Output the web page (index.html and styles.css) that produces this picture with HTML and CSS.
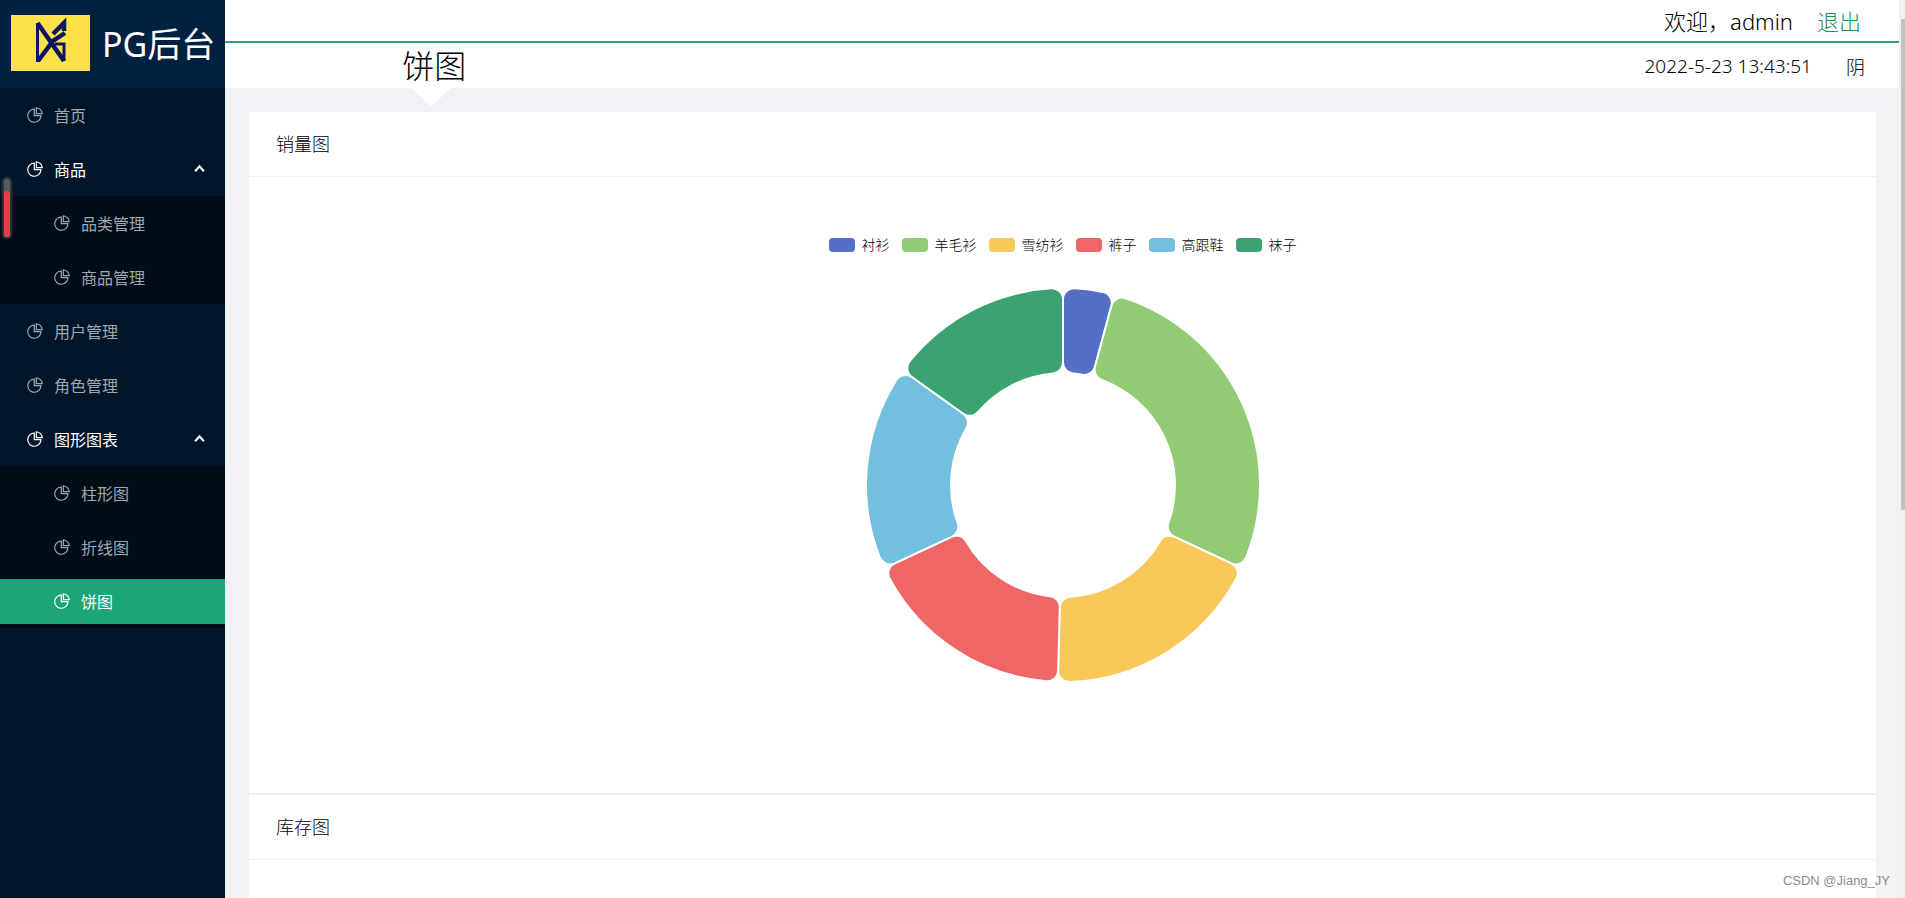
FILE: index.html
```html
<!DOCTYPE html>
<html lang="zh-CN">
<head>
<meta charset="utf-8">
<title>PG后台</title>
<link rel="stylesheet" href="styles.css">
</head>
<body>
<svg class="sprite" aria-hidden="true">
  <symbol id="pie" viewBox="64 64 896 896">
    <path d="M864 518H506V160c0-4.400-3.600-8-8-8h-26a398.460 398.460 0 0 0-282.800 117.100 398.190 398.190 0 0 0-85.700 127.100A397.610 397.610 0 0 0 72 552a398.460 398.460 0 0 0 117.100 282.800c36.700 36.700 79.500 65.600 127.100 85.700A397.610 397.610 0 0 0 472 952a398.460 398.460 0 0 0 282.800-117.100c36.700-36.700 65.600-79.500 85.700-127.100A397.610 397.610 0 0 0 872 552v-26c0-4.400-3.600-8-8-8zM705.700 787.800A331.590 331.590 0 0 1 470.400 884c-88.100-.4-170.900-34.900-233.200-97.200C174.500 724.100 140 640.700 140 552c0-88.700 34.500-172.100 97.200-234.800 54.600-54.600 124.900-87.900 200.800-95.500V586h364.300c-7.700 76.300-41.300 147-96.600 201.800zM952 462.400l-2.600-28.200c-8.500-92.100-49.400-179-115.200-244.600A399.400 399.400 0 0 0 589 74.600L560.700 72c-4.700-.4-8.700 3.200-8.700 7.900V464c0 4.400 3.600 8 8 8l384-1c4.700 0 8.400-4 8-8.600zm-332.200-58.200V147.600a332.240 332.240 0 0 1 166.400 89.800c45.700 45.600 77 103.600 90 166.100l-256.400.7z"/>
  </symbol>
  <symbol id="up" viewBox="0 0 10 8"><path d="M1 6.500 5 2l4 4.500" fill="none" stroke="currentColor" stroke-width="2"/></symbol>
</svg>
<div class="app">
  <aside class="sidebar">
    <a class="brand" href="#">
      <svg class="logo" viewBox="0 0 79 56" aria-hidden="true">
        <rect width="79" height="56" fill="#fee14a"/>
        <g fill="none" stroke="#0b1560">
          <path stroke-width="3" d="M26.500 8v39M53 46V29h-9"/>
          <path stroke-width="4.500" d="M26.500 8 53 46M27 46l15-20 12-8M42 19 53 8v8"/>
        </g>
      </svg>
      <h1 class="brand-name">PG后台</h1>
    </a>
    <nav class="menu">
      <a class="item" href="#"><svg class="icon"><use href="#pie"/></svg>首页</a>
      <button class="item open" type="button"><svg class="icon"><use href="#pie"/></svg>商品<svg class="arrow"><use href="#up"/></svg></button>
      <div class="submenu">
        <a class="item" href="#"><svg class="icon"><use href="#pie"/></svg>品类管理</a>
        <a class="item" href="#"><svg class="icon"><use href="#pie"/></svg>商品管理</a>
      </div>
      <a class="item" href="#"><svg class="icon"><use href="#pie"/></svg>用户管理</a>
      <a class="item" href="#"><svg class="icon"><use href="#pie"/></svg>角色管理</a>
      <button class="item open" type="button"><svg class="icon"><use href="#pie"/></svg>图形图表<svg class="arrow"><use href="#up"/></svg></button>
      <div class="submenu">
        <a class="item" href="#"><svg class="icon"><use href="#pie"/></svg>柱形图</a>
        <a class="item" href="#"><svg class="icon"><use href="#pie"/></svg>折线图</a>
        <a class="item selected" href="#"><svg class="icon"><use href="#pie"/></svg>饼图</a>
      </div>
    </nav>
  </aside>
  <div class="page">
    <header class="header">
      <div class="user-bar"><span>欢迎，admin</span><a class="logout" href="#">退出</a></div>
      <div class="title-bar">
        <h2 class="title">饼图</h2>
        <div class="info"><time>2022-5-23 13:43:51</time><span>阴</span></div>
      </div>
    </header>
    <main class="content">
      <section class="card">
        <h3 class="card-title">销量图</h3>
        <div class="card-body">
          <ul class="legend">
            <li><i class="swatch c1"></i>衬衫</li>
            <li><i class="swatch c2"></i>羊毛衫</li>
            <li><i class="swatch c3"></i>雪纺衫</li>
            <li><i class="swatch c4"></i>裤子</li>
            <li><i class="swatch c5"></i>高跟鞋</li>
            <li><i class="swatch c6"></i>袜子</li>
          </ul>
          <svg class="donut" id="donut" viewBox="-197 -197 394 394" role="img" aria-label="销量图"></svg>
        </div>
      </section>
      <section class="card">
        <h3 class="card-title">库存图</h3>
        <div class="card-body"></div>
      </section>
    </main>
  </div>
  <div class="scroll-track"><div class="scroll-thumb"></div></div>
</div>
<div class="meter"><div class="meter-fill"></div></div>
<div class="watermark">CSDN @Jiang_JY</div>
<script src="chart.js"></script>
</body>
</html>
```
FILE: styles.css
```css
* { box-sizing: border-box; }
body {
  margin: 0;
  height: 100vh;
  overflow: hidden;
  font-family: "Noto Sans", "Noto Sans CJK SC", sans-serif;
  font-size: 16px;
  font-weight: 300;
  color: #000;
}
h1, h2, h3, ul { margin: 0; padding: 0; font-weight: 300; list-style: none; }
a { color: inherit; text-decoration: none; }
.sprite { position: absolute; width: 0; height: 0; }
.app { display: flex; height: 100vh; }

.sidebar { flex: none; width: 225px; background: #001529; }
.brand {
  display: flex;
  align-items: center;
  gap: 12px;
  height: 88px;
  padding: 0 0 2px 11px;
  background: #002140;
  color: #fff;
}
.logo { flex: none; width: 79px; height: 56px; }
.brand-name { padding-top: 2px; font-size: 34px; line-height: 48px; font-weight: 400; white-space: nowrap; }
.menu, .submenu { display: flex; flex-direction: column; }
.item {
  display: flex;
  align-items: center;
  height: 45px;
  margin: 5px 0 4px;
  padding: 0 20px 2px 27px;
  border: 0;
  background: none;
  font: inherit;
  font-weight: 400;
  color: #a0a7ae;
  cursor: pointer;
}
.item.open { color: #fff; }
.icon { width: 16px; height: 16px; margin-right: 11px; fill: currentColor; }
.arrow { width: 11px; height: 9px; margin-left: auto; }
.submenu { background: #000c17; }
.submenu .item { padding-left: 54px; }
.submenu .selected { background: #1da57a; color: #fff; }

.page { flex: 1; min-width: 0; overflow: hidden; background: #f0f2f5; }
.header { background: #fff; }
.user-bar {
  display: flex;
  align-items: center;
  justify-content: flex-end;
  gap: 24px;
  height: 43px;
  padding: 0 38px 2px 0;
  border-bottom: 2px solid #3a9a7a;
  font-size: 22px;
}
.logout { color: #1d8f62; }
.title-bar { display: flex; align-items: center; justify-content: space-between; height: 45px; }
.title {
  position: relative;
  width: 25%;
  font-size: 32px;
  line-height: 45px;
  text-align: center;
}
.title::after {
  content: "";
  position: absolute;
  top: 100%;
  left: 50%;
  margin-left: -23px;
  width: 40px;
  height: 18px;
  background: #fff;
  clip-path: polygon(0 0, 100% 0, 50% 100%);
}
.info { display: flex; gap: 34px; padding: 3px 34px 0 0; font-size: 19px; }

.content { padding: 24px 23px 0 24px; }
.card { background: #fff; border-bottom: 2px solid #f0f0f0; }
.card-title {
  height: 65px;
  padding: 0 27px;
  border-bottom: 1px solid #f0f0f0;
  font-size: 18px;
  line-height: 65px;
}
.card-body {
  display: flex;
  flex-direction: column;
  align-items: center;
  gap: 33px;
  min-height: 616px;
  padding-top: 58px;
}
.legend { display: flex; gap: 12px; font-size: 14px; line-height: 20px; color: #000; }
.legend li { display: flex; align-items: center; gap: 7px; }
.swatch { width: 26px; height: 14px; border-radius: 4px; }
.donut { width: 394px; height: 394px; stroke: #fff; stroke-width: 2; }
.c1 { background: #5470c6; fill: #5470c6; }
.c2 { background: #91cc75; fill: #91cc75; }
.c3 { background: #fac858; fill: #fac858; }
.c4 { background: #ee6666; fill: #ee6666; }
.c5 { background: #73c0de; fill: #73c0de; }
.c6 { background: #3ba272; fill: #3ba272; }

.scroll-track { flex: none; width: 6px; padding: 19px 0 0 2px; background: #f1f1f1; }
.scroll-thumb { height: 491px; background: #c1c1c1; }
.meter {
  position: absolute;
  left: 4px;
  top: 179px;
  width: 6px;
  height: 58px;
  padding-top: 12px;
  border-radius: 3px;
  background: #525d63;
  box-shadow: 0 0 2px 2px #343b40;
}
.meter-fill { height: 46px; border-radius: 2px; background: #dd4247; }
.watermark {
  position: absolute;
  right: 15px;
  bottom: 8px;
  font-family: "Liberation Sans", sans-serif;
  font-size: 13px;
  font-weight: 400;
  line-height: 18px;
  color: #8c8c8c;
}
```
FILE: chart.js
```js
const values = [5, 33, 22, 21, 20, 18];
const OUTER = 197, INNER = 112, CORNER = 11;
const total = values.reduce((a, b) => a + b, 0);
const point = (radius, angle) =>
  `${(radius * Math.sin(angle)).toFixed(2)} ${(-radius * Math.cos(angle)).toFixed(2)}`;

// Ring sector from angle a to angle b with four rounded corners.
function sector(a, b) {
  const outTurn = Math.asin(CORNER / (OUTER - CORNER));
  const inTurn = Math.asin(CORNER / (INNER + CORNER));
  const outSide = Math.sqrt((OUTER - CORNER) ** 2 - CORNER ** 2);
  const inSide = Math.sqrt((INNER + CORNER) ** 2 - CORNER ** 2);
  const corner = `A${CORNER} ${CORNER} 0 0 1 `;
  return `M${point(outSide, a)}` +
    corner + point(OUTER, a + outTurn) +
    `A${OUTER} ${OUTER} 0 0 1 ${point(OUTER, b - outTurn)}` +
    corner + point(outSide, b) +
    `L${point(inSide, b)}` +
    corner + point(INNER, b - inTurn) +
    `A${INNER} ${INNER} 0 0 0 ${point(INNER, a + inTurn)}` +
    corner + point(inSide, a) + "Z";
}

let start = 0;
values.forEach((value, i) => {
  const end = start + value / total * Math.PI * 2;
  const path = document.createElementNS("http://www.w3.org/2000/svg", "path");
  path.setAttribute("d", sector(start, end));
  path.setAttribute("class", `c${i + 1}`);
  document.getElementById("donut").append(path);
  start = end;
});
```
